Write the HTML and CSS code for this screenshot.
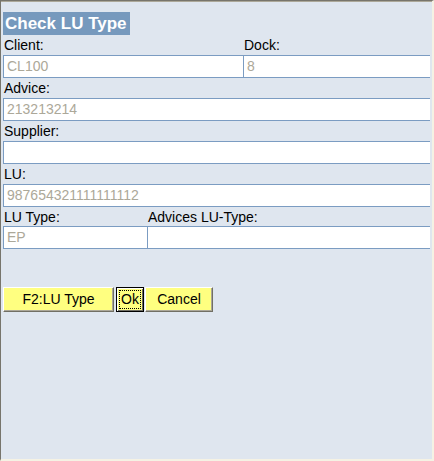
FILE: index.html
```html
<!DOCTYPE html>
<html>
<head>
<meta charset="utf-8">
<link rel="stylesheet" href="styles.css">
</head>
<body>
<div class="frame">
  <div class="title">Check LU Type</div>
  <div class="grid cols-a">
    <div class="field"><div class="label">Client:</div><div class="input">CL100</div></div>
    <div class="field"><div class="label">Dock:</div><div class="input">8</div></div>
  </div>
  <div class="field"><div class="label">Advice:</div><div class="input">213213214</div></div>
  <div class="field"><div class="label">Supplier:</div><div class="input"></div></div>
  <div class="field"><div class="label">LU:</div><div class="input">987654321111111112</div></div>
  <div class="grid cols-b">
    <div class="field"><div class="label short">LU Type:</div><div class="input">EP</div></div>
    <div class="field"><div class="label short">Advices LU-Type:</div><div class="input"></div></div>
  </div>
  <div class="buttons">
    <button class="btn btn-f2">F2:LU Type</button>
    <button class="btn btn-ok"><span class="focus">Ok</span></button>
    <button class="btn btn-cancel">Cancel</button>
  </div>
</div>
</body>
</html>
```

FILE: styles.css
```css
html, body {
  margin: 0;
  padding: 0;
  height: 100%;
}
body {
  font-family: "Liberation Sans", Arial, sans-serif;
  font-size: 14px;
  background: #f3f1e6;
}
.frame {
  box-sizing: border-box;
  height: 461px;
  width: 434px;
  background: #dfe6ef;
  border-top: 1px solid #77756c;
  border-left: 1px solid #77756c;
  border-right: 2px solid #f5f2e4;
  border-bottom: 2px solid #f5f2e4;
  box-shadow: inset 0 1px 0 #aca899;
  padding: 11px 2px 0 2px;
}
.title {
  display: inline-block;
  background: #7699bd;
  color: #ffffff;
  font-weight: bold;
  font-size: 17px;
  height: 23px;
  line-height: 24px;
  padding: 0 2px 0 2px;
  width: 127px;
  box-sizing: border-box;
  white-space: nowrap;
}
.grid {
  display: grid;
}
.cols-a {
  grid-template-columns: 240px 1fr;
}
.cols-b {
  grid-template-columns: 144px 1fr;
}
.label {
  height: 20px;
  line-height: 19px;
  padding: 1px 0 0 1px;
  box-sizing: border-box;
  color: #000;
  white-space: nowrap;
}
.label.short {
  height: 19px;
  line-height: 18px;
}
.input {
  box-sizing: border-box;
  height: 23px;
  line-height: 21px;
  background: #ffffff;
  border-top: 1px solid #7b9cc2;
  border-bottom: 1px solid #7b9cc2;
  border-left: 1px solid #7b9cc2;
  padding-left: 3px;
  color: #aca899;
}
.buttons {
  display: flex;
  margin-top: 38px;
}
.btn {
  font-family: "Liberation Sans", Arial, sans-serif;
  font-size: 14px;
  height: 25px;
  background: #ffff80;
  color: #000;
  border-style: solid;
  border-width: 1px;
  border-color: #ffffff #716f64 #716f64 #ffffff;
  box-shadow: inset -1px -1px 0 #aca899;
  padding: 0;
  margin: 0;
  line-height: 21px;
  box-sizing: border-box;
}
.btn-f2 {
  width: 111px;
  margin-right: 2px;
}
.btn-ok {
  width: 28px;
  margin-right: 1px;
  border: 1px solid #000;
  box-shadow: inset 1px 1px 0 #ffffff, inset -1px -1px 0 #716f64;
  padding: 2px;
  display: flex;
}
.focus {
  flex: 1;
  border: 1px dotted #000;
  line-height: 17px;
  text-align: center;
}
.btn-cancel {
  width: 68px;
}
```
